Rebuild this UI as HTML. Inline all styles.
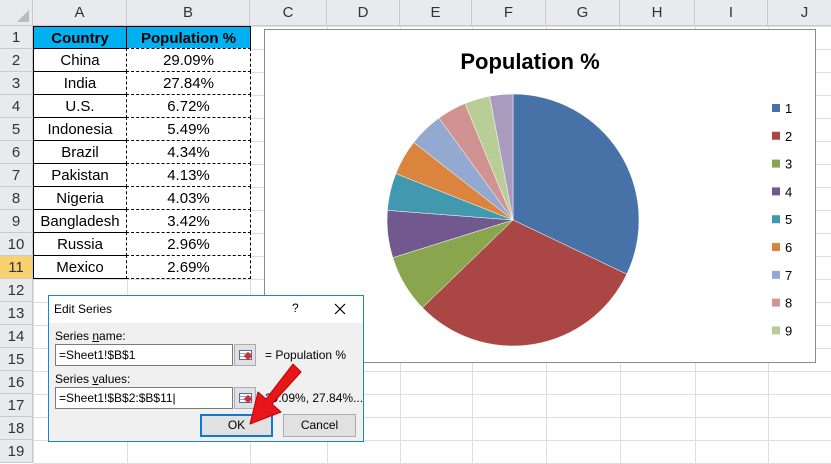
<!DOCTYPE html><html><head><meta charset="utf-8"><style>
body{margin:0;width:831px;height:454px;overflow:hidden;background:#fff;font-family:"Liberation Sans",sans-serif;position:relative}
.a{position:absolute;box-sizing:border-box}
.hd{background:#e8eaed;color:#333;font-size:15px;text-align:center;border-right:1px solid #c6c9cd;border-bottom:1px solid #c6c9cd}
.c{font-size:15px;text-align:center;color:#000;line-height:23px}
</style></head><body>
<div id="g"></div>
<svg class="a" style="left:264px;top:29px" width="560" height="335">
<rect x="0.5" y="0.5" width="551" height="333" fill="#fff" stroke="#8c8c8c"/>
<text x="266" y="40" font-size="22" font-weight="bold" text-anchor="middle" font-family="Liberation Sans">Population %</text>
<g id="pie"></g><g id="leg"></g>
</svg>
<div class="a" style="left:48px;top:295px;width:316px;height:147px;border:1px solid #1883d7;background:#f0f0f0">
 <div class="a" style="left:0;top:0;width:314px;height:27px;background:#fff;font-size:12px;padding:6px 0 0 5px">Edit Series<span style="position:absolute;left:243px;top:5px">?</span><svg style="position:absolute;left:285px;top:7px" width="12" height="12"><path d="M1 1L11 11M11 1L1 11" stroke="#000" stroke-width="1.2"/></svg></div>
 <div class="a" style="left:6px;top:33px;font-size:12px">Series <u>n</u>ame:</div>
 <div class="a" style="left:6px;top:48px;width:178px;height:22px;border:1px solid #7a7a7a;background:#fff;font-size:12px;padding:3px 0 0 3px">=Sheet1!$B$1</div>
 <div class="a" style="left:185px;top:48px;width:22px;height:22px;border:1px solid #adadad;background:#e1e1e1"><div class="a" style="left:4px;top:5px;width:13px;height:10px;border:1px solid #4b6fa6;background:repeating-linear-gradient(#fff 0 2px,#8aa6d0 2px 3px)"></div><div class="a" style="left:10px;top:8px;width:6px;height:6px;background:#d03030;transform:rotate(45deg)"></div></div>
 <div class="a" style="left:216px;top:52px;font-size:12px">= Population %</div>
 <div class="a" style="left:6px;top:76px;font-size:12px">Series <u>v</u>alues:</div>
 <div class="a" style="left:6px;top:91px;width:178px;height:22px;border:1px solid #7a7a7a;background:#fff;font-size:12px;padding:3px 0 0 3px">=Sheet1!$B$2:$B$11|</div>
 <div class="a" style="left:185px;top:91px;width:22px;height:22px;border:1px solid #adadad;background:#e1e1e1"><div class="a" style="left:4px;top:5px;width:13px;height:10px;border:1px solid #4b6fa6;background:repeating-linear-gradient(#fff 0 2px,#8aa6d0 2px 3px)"></div><div class="a" style="left:10px;top:8px;width:6px;height:6px;background:#d03030;transform:rotate(45deg)"></div></div>
 <div class="a" style="left:216px;top:95px;font-size:12px;white-space:nowrap">29.09%, 27.84%...</div>
 <div class="a" style="left:151px;top:118px;width:73px;height:23px;border:2px solid #1477d2;background:#e1e1e1;font-size:12px;text-align:center;line-height:19px">OK</div>
 <div class="a" style="left:234px;top:118px;width:73px;height:23px;border:1px solid #adadad;background:#e1e1e1;font-size:12px;text-align:center;line-height:21px">Cancel</div>
</div>
<svg class="a" style="left:0;top:0" width="831" height="454"><path d="M293 364 L301 372 L272 404 L281 412 L250 424 L258 392 L266 399 Z" fill="#e8161b" stroke="#b00" stroke-width="1" stroke-linejoin="round"/></svg>
<script>
var g='',cols=[33,127,250,327,400,472,546,620,695,768,842],L='ABCDEFGHIJ';
g+='<div class="a hd" style="left:0;top:0;width:33px;height:26px"><div class="a" style="right:3px;bottom:3px;border-left:12px solid transparent;border-bottom:12px solid #b8bcc0"></div></div>';
for(var i=0;i<10;i++)g+='<div class="a hd" style="left:'+cols[i]+'px;top:0;width:'+(cols[i+1]-cols[i])+'px;height:26px;line-height:26px">'+L[i]+'</div>';
for(var r=1;r<=19;r++){var t=26+(r-1)*23;g+='<div class="a hd" style="left:0;top:'+t+'px;width:33px;height:23px;line-height:23px;'+(r==11?'background:#f8d270;':'')+'">'+r+'</div>';
for(var i=0;i<10;i++)g+='<div class="a" style="left:'+cols[i]+'px;top:'+t+'px;width:'+(cols[i+1]-cols[i]+1)+'px;height:24px;border:1px solid #dedede"></div>';}
var d=[['China','29.09%'],['India','27.84%'],['U.S.','6.72%'],['Indonesia','5.49%'],['Brazil','4.34%'],['Pakistan','4.13%'],['Nigeria','4.03%'],['Bangladesh','3.42%'],['Russia','2.96%'],['Mexico','2.69%']];
g+='<div class="a c" style="left:33px;top:26px;width:94px;height:23px;background:#00b0f0;font-weight:bold;border:1px solid #000">Country</div>';
g+='<div class="a c" style="left:126px;top:26px;width:125px;height:23px;background:#00b0f0;font-weight:bold;border:1px solid #000">Population %</div>';
for(var k=0;k<10;k++){var t=48+k*23;g+='<div class="a c" style="left:33px;top:'+t+'px;width:94px;height:24px;border:1px solid #000;background:#fff">'+d[k][0]+'</div><div class="a c" style="left:126px;top:'+t+'px;width:125px;height:24px;border:1px dashed #000;background:#fff">'+d[k][1]+'</div>';}
document.getElementById('g').innerHTML=g;
var v=[29.09,27.84,6.72,5.49,4.34,4.13,4.03,3.42,2.96,2.69],s=0;v.forEach(function(x){s+=x});
var C=['#4672a8','#aa4744','#89a54e','#71588f','#4198af','#db843d','#93a9cf','#d19392','#b9cd96','#a99bbd'];
var cx=249,cy=191,R=126,a=0,p='';
for(var k=0;k<10;k++){var a2=a+v[k]/s*2*Math.PI;var x1=cx+R*Math.sin(a),y1=cy-R*Math.cos(a),x2=cx+R*Math.sin(a2),y2=cy-R*Math.cos(a2);
p+='<path d="M'+cx+' '+cy+' L'+x1+' '+y1+' A'+R+' '+R+' 0 '+((a2-a)>Math.PI?1:0)+' 1 '+x2+' '+y2+' Z" fill="'+C[k]+'" stroke="#fff" stroke-width="0.5"/>';a=a2;}
document.getElementById('pie').innerHTML=p;
var l='';for(var k=0;k<9;k++){var y=75+k*27.8;l+='<rect x="508" y="'+y+'" width="8" height="8" fill="'+C[k]+'"/><text x="521" y="'+(y+9)+'" font-size="13" font-family="Liberation Sans">'+(k+1)+'</text>';}
document.getElementById('leg').innerHTML=l;
</script>
</body></html>
